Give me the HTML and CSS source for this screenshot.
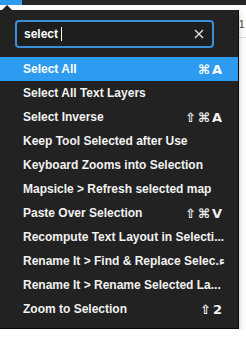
FILE: index.html
```html
<!DOCTYPE html>
<html>
<head>
    <meta charset="UTF-8">
    <title>Command Search</title>
    <link rel="stylesheet" href="styles.css">
</head>
<body>
    <div class="topbar">
        <div class="topbar-tab"></div>
        <div class="topbar-rest"></div>
    </div>

    <div class="page">
        <div class="panel">
            <div class="search">
                <span class="search-text">select</span>
                <span class="cursor"></span>
                <svg class="clear" width="10" height="10" viewBox="0 0 10 10">
                    <path d="M1 1 L9 9 M9 1 L1 9" stroke="#e6e6e6" stroke-width="1.3" fill="none"/>
                </svg>
            </div>

            <div class="list">
                <div class="row selected"><span class="label">Select All</span><span class="keys">⌘A</span></div>
                <div class="row"><span class="label">Select All Text Layers</span></div>
                <div class="row"><span class="label">Select Inverse</span><span class="keys">⇧⌘A</span></div>
                <div class="row"><span class="label">Keep Tool Selected after Use</span></div>
                <div class="row"><span class="label">Keyboard Zooms into Selection</span></div>
                <div class="row"><span class="label">Mapsicle &gt; Refresh selected map</span></div>
                <div class="row"><span class="label">Paste Over Selection</span><span class="keys">⇧⌘V</span></div>
                <div class="row"><span class="label">Recompute Text Layout in Selecti...</span></div>
                <div class="row"><span class="label">Rename It &gt; Find &amp; Replace Selec.ء</span></div>
                <div class="row"><span class="label">Rename It &gt; Rename Selected La...</span></div>
                <div class="row"><span class="label">Zoom to Selection</span><span class="keys">⇧2</span></div>
            </div>
        </div>
        <div class="side">
            <div class="side-num">1</div>
            <div class="side-line"></div>
        </div>
    </div>
</body>
</html>
```

FILE: styles.css
```css
body {
    margin: 0;
    background: #fff;
    font-family: "Liberation Sans", Arial, sans-serif;
    -webkit-font-smoothing: antialiased;
}
.topbar {
    display: flex;
    height: 5px;
}
.topbar-tab {
    width: 22px;
    background: #2d9cf0;
}
.topbar-rest {
    flex: 1;
    background: #262626;
}
.page {
    display: flex;
}
.panel {
    position: relative;
    width: 238px;
    margin-top: 5px;
    padding: 10px 0 7px;
    background: #222;
    border-right: 1px solid #0c0c0c;
    border-bottom: 1px solid #0c0c0c;
    box-shadow: 0 3px 6px rgba(0,0,0,0.25);
}
.panel::before {
    content: "";
    position: absolute;
    left: 2px;
    top: -5px;
    border-left: 5px solid transparent;
    border-right: 5px solid transparent;
    border-bottom: 5px solid #222;
}
.search {
    display: flex;
    align-items: center;
    height: 28px;
    margin: 0 24px 0 15px;
    padding: 0 8px 0 7px;
    box-sizing: border-box;
    border: 2px solid #3a8fd8;
    border-radius: 4px;
    background: #1e1e1e;
}
.search-text {
    color: #fff;
    font-size: 12px;
    font-weight: bold;
}
.cursor {
    width: 1px;
    height: 14px;
    margin-left: 3px;
    background: #fff;
}
.clear {
    margin-left: auto;
}
.list {
    margin-top: 9px;
}
.row {
    display: flex;
    align-items: center;
    justify-content: space-between;
    height: 24px;
    padding: 0 16px 0 23px;
    color: #f2f2f2;
    font-size: 12px;
    font-weight: bold;
    white-space: nowrap;
}
.row.selected {
    background: #2d9cf0;
    color: #fff;
}
.keys {
    font-family: "DejaVu Sans", sans-serif;
    font-size: 13px;
    letter-spacing: 2px;
    margin-right: -2px;
}
.side {
    flex: 1;
    min-width: 0;
    padding-top: 14px;
}
.side-num {
    font-size: 10px;
    color: #444;
}
.side-line {
    height: 1px;
    background: #ddd;
    margin-top: 7px;
}
```
